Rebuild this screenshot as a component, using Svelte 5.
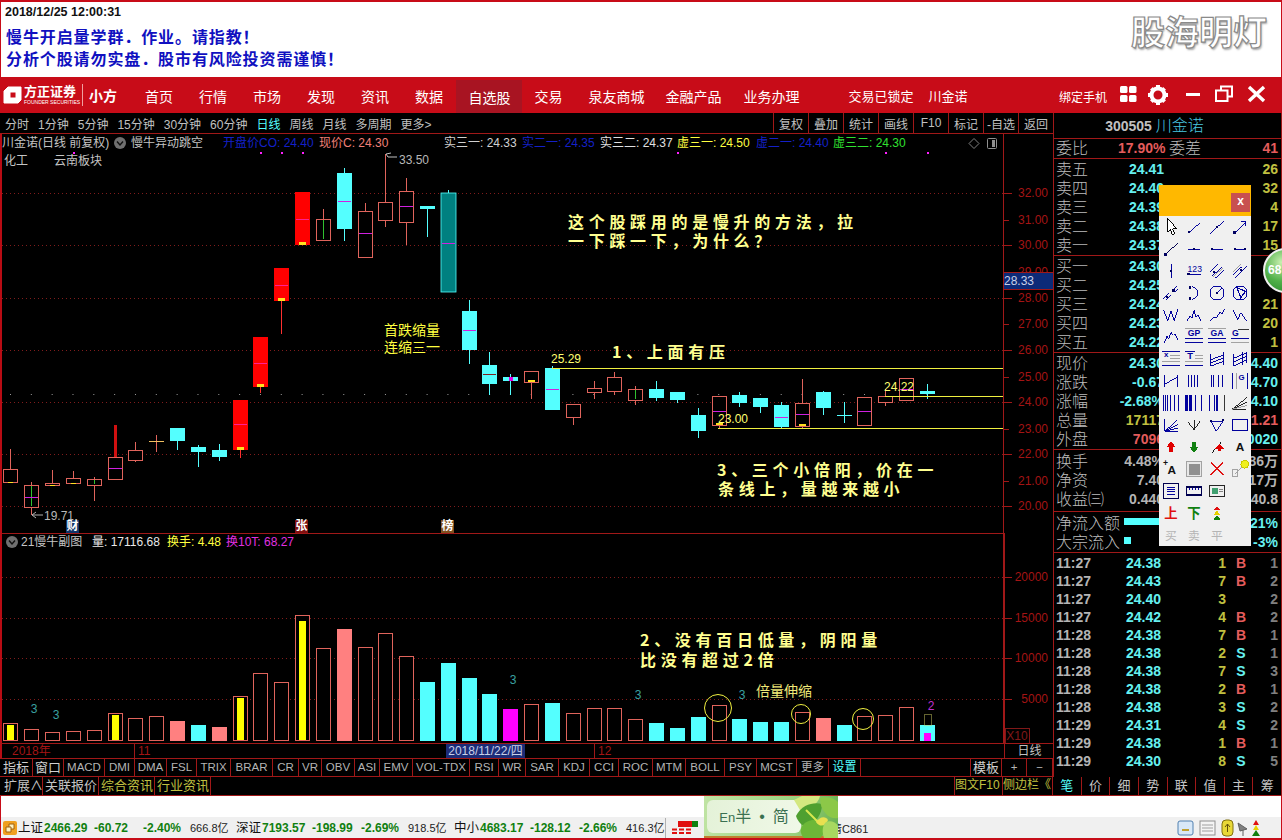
<script>
  const X = (i) => Math.round(10.4 + 20.83 * i);

  // hi, top, bottom, lo, kind, mid, flags
  const candles = [
    [449, 469, 482, 482, 'o', 0, 'y'],
    [482, 485, 507, 515, 'o', 497, 'g'],
    [470, 483, 485, 485, 'o', 0, 'y'],
    [471, 478, 483, 483, 'o', 0, 'y'],
    [477, 479, 485, 501, 'o', 0, 'g'],
    [425, 457, 479, 479, 'o', 468, 'w'],
    [442, 450, 460, 462, 'o', 0, ''],
    [435, 441, 442, 452, 'x', 0, ''],
    [428, 428, 441, 450, 'c', 0, ''],
    [445, 447, 452, 467, 'c', 0, ''],
    [444, 450, 457, 461, 'c', 0, ''],
    [400, 400, 450, 458, 'r', 424, 'y'],
    [337, 337, 387, 393, 'r', 363, 'y'],
    [268, 268, 301, 334, 'r', 285, 'y'],
    [192, 192, 245, 245, 'r', 219, 'y'],
    [209, 219, 240, 240, 'o', 0, 'g'],
    [168, 173, 229, 241, 'c', 201, ''],
    [203, 211, 257, 258, 'o', 233, ''],
    [154, 202, 220, 227, 'o', 0, ''],
    [178, 191, 222, 245, 'o', 206, ''],
    [206, 206, 209, 237, 'c', 0, ''],
    [190, 193, 292, 292, 't', 243, ''],
    [300, 311, 350, 364, 'c', 330, ''],
    [352, 365, 384, 395, 'c', 374, ''],
    [374, 377, 381, 395, 'c', 379, 'p'],
    [371, 371, 382, 399, 'o', 0, 'y'],
    [366, 368, 410, 410, 'c', 389, ''],
    [404, 404, 417, 425, 'o', 0, ''],
    [381, 388, 392, 399, 'o', 0, ''],
    [372, 377, 391, 395, 'o', 0, ''],
    [386, 389, 400, 405, 'o', 0, 'g'],
    [381, 389, 398, 401, 'c', 0, ''],
    [392, 392, 400, 403, 'c', 0, ''],
    [408, 415, 431, 438, 'c', 0, ''],
    [396, 396, 425, 428, 'o', 411, 'y'],
    [392, 395, 403, 407, 'c', 0, ''],
    [398, 398, 407, 413, 'c', 0, ''],
    [402, 405, 427, 429, 'c', 417, ''],
    [379, 403, 426, 428, 'o', 414, 'y'],
    [391, 392, 408, 415, 'c', 0, ''],
    [402, 415, 416, 423, 'z', 0, ''],
    [397, 397, 425, 425, 'o', 411, ''],
    [389, 396, 402, 406, 'o', 0, ''],
    [378, 378, 400, 400, 'o', 389, ''],
    [384, 391, 394, 399, 'c', 0, '']
  ];

  // top of bar, kind (o hollow, y hollow + yellow core, s salmon, c cyan, m magenta)
  const volumes = [
    [723, 'y'], [729, 'o'], [732, 'o'], [731, 'o'], [730, 'o'], [713, 'y'], [718, 'o'], [716, 'o'], [721, 's'],
    [725, 'c'], [727, 's'], [696, 'y'], [673, 'o'], [682, 'o'], [615, 'y'], [648, 'o'], [629, 's'], [647, 'o'],
    [633, 'o'], [656, 'o'], [682, 'c'], [663, 'c'], [678, 'c'], [694, 'c'], [709, 'm'], [704, 'o'], [703, 'c'],
    [713, 'o'], [708, 'o'], [708, 'o'], [719, 'o'], [723, 'c'], [728, 'c'], [717, 'c'], [705, 'o'], [719, 'c'],
    [722, 'c'], [722, 'c'], [712, 'o'], [718, 's'], [725, 'c'], [716, 'o'], [715, 'o'], [707, 'o'], [725, 'c']
  ];

  const priceAxis = [
    ['32.00', 193], ['31.00', 220], ['30.00', 245], ['29.00', 272], ['28.00', 298], ['27.00', 324], ['26.00', 350],
    ['25.00', 377], ['24.00', 402], ['23.00', 429], ['22.00', 454], ['21.00', 481], ['20.00', 506]
  ];
  const volAxis = [['20000', 577], ['15000', 618], ['10000', 658], ['5000', 699]];
  const priceGrid = [193, 245, 298, 350, 402, 454, 506];
  const volGrid = [577, 618, 658, 699];
  const marks = [73, 260, 281, 302, 677, 885, 927];

  const legend = [
    ['川金诺(日线 前复权)', 2, '#c4c4c4'], ['慢牛异动跳空', 131, '#c4c4c4'], ['开盘价CO: 24.40', 223, '#1420c8'],
    ['现价C: 24.30', 319, '#f08078'], ['实三一: 24.33', 444, '#d0d0d0'], ['实二一: 24.35', 522, '#1420c8'],
    ['实三二: 24.37', 600, '#e0e0e0'], ['虚三一: 24.50', 677, '#ffff40'], ['虚二一: 24.40', 756, '#1420c8'],
    ['虚三二: 24.30', 833, '#30e030']
  ];

  const notes = [
    ['这个股踩用的是慢升的方法，拉', 568, 221], ['一下踩一下，为什么？', 568, 240], ['1、上面有压', 612, 351],
    ['3、三个小倍阳，价在一', 717, 469], ['条线上，量越来越小', 718, 488], ['2、没有百日低量，阴阳量', 640, 639],
    ['比没有超过2倍', 640, 659]
  ];

  const navItems = ['首页', '行情', '市场', '发现', '资讯', '数据', '自选股', '交易', '泉友商城'];
  const periods = ['分时', '1分钟', '5分钟', '15分钟', '30分钟', '60分钟', '日线', '周线', '月线', '多周期', '更多>'];
  const actions = ['复权', '叠加', '统计', '画线', 'F10', '标记', '-自选', '返回'];
  const indicators = ['指标', '窗口', 'MACD', 'DMI', 'DMA', 'FSL', 'TRIX', 'BRAR', 'CR', 'VR', 'OBV', 'ASI', 'EMV', 'VOL-TDX', 'RSI', 'WR', 'SAR', 'KDJ', 'CCI', 'ROC', 'MTM', 'BOLL', 'PSY', 'MCST', '更多', '设置'];
  const sideTabs = ['笔', '价', '细', '势', '联', '值', '主', '筹'];

  const asks = [['卖五', '24.41', '26'], ['卖四', '24.40', '32'], ['卖三', '24.39', '4'], ['卖二', '24.38', '17'], ['卖一', '24.37', '15']];
  const bids = [['买一', '24.30', ''], ['买二', '24.25', ''], ['买三', '24.24', '21'], ['买四', '24.23', '20'], ['买五', '24.22', '1']];
  const stats = [
    ['现价', '24.30', 'cyan', '24.40', 'cyan'], ['涨跌', '-0.67', 'cyan', '24.70', 'cyan'], ['涨幅', '-2.68%', 'cyan', '24.10', 'cyan'],
    ['总量', '17117', 'olive', '1.21', 'red'], ['外盘', '7096', 'red', '10020', 'cyan']
  ];
  const funds = [['换手', '4.48%', '86万'], ['净资', '7.40', '17万'], ['收益㈢', '0.440', '40.8']];
  const trades = [
    ['11:27', '24.38', 1, 'B', 1], ['11:27', '24.43', 7, 'B', 2], ['11:27', '24.40', 3, '', 2], ['11:27', '24.42', 4, 'B', 2],
    ['11:28', '24.38', 7, 'B', 1], ['11:28', '24.38', 2, 'S', 1], ['11:28', '24.38', 7, 'S', 3], ['11:28', '24.38', 2, 'B', 1],
    ['11:28', '24.38', 3, 'S', 2], ['11:29', '24.31', 4, 'S', 2], ['11:29', '24.38', 1, 'B', 1], ['11:29', '24.30', 8, 'S', 5]
  ];
  const indices = [
    ['上证', '2466.29', '-60.72', '-2.40%', '666.8亿'],
    ['深证', '7193.57', '-198.99', '-2.69%', '918.5亿'],
    ['中小', '4683.17', '-128.12', '-2.66%', '416.3亿']
  ];

  const dot = (x, y) => `<rect x="${x - 1.5}" y="${y - 1.5}" width="3" height="3" fill="#000060" stroke="none"/>`;
  const label = (t, x, y, size = 9, fill = '#00009c', weight = 'normal') =>
    `<text x="${x}" y="${y}" font-size="${size}" font-weight="${weight}" fill="${fill}" stroke="none" text-anchor="middle">${t}</text>`;
  const gray = '#a0a0a0';
  const tools = [
    '<path d="M7 0V17L10 14L13 21L16 19.5L13 13H18Z" fill="#fff" stroke="#000"/>',
    '<path d="M4 18L18 5"/>' + dot(5, 17),
    '<path d="M2 20L20 3"/>' + dot(11, 11),
    '<path d="M4 18L18 4M12 4H18V10"/>' + dot(4, 18),
    '<path d="M2 20L20 3" stroke="#000050"/>' + dot(4, 18),
    '<path d="M3 11H19"/>' + dot(11, 11),
    '<path d="M3 11H19"/>' + dot(5, 11),
    '<path d="M3 11H19"/>' + dot(5, 11) + dot(17, 11),
    '<path d="M11 2V20"/>' + dot(11, 11),
    label('123', 12, 12, 11) + '<path d="M3 15H20"/>' + dot(4, 15),
    `<path d="M2 12L12 3M4 17L17 5M9 20L20 10" /><path d="M6 18L18 8" stroke="${gray}"/>` + dot(7, 12),
    `<path d="M2 16L14 5M5 19L20 5" /><path d="M2 12L12 3" stroke="${gray}"/>` + dot(12, 10),
    '<path d="M2 18L9 11M12 8L18 3M5 20L12 13M15 10L20 6"/>' + dot(6, 16) + dot(14, 8),
    '<path d="M8 3A8 8 0 0 1 8 19"/>' + dot(6, 4) + dot(6, 18),
    '<circle cx="11" cy="11" r="9"/><path d="M11 11L17 5"/>' + dot(11, 11),
    '<circle cx="11" cy="11" r="9"/><path d="M7 4L18 9L12 17Z" stroke-width="1.4"/>',
    '<path d="M2 4L7 18L11 6L15 18L20 3"/>',
    '<path d="M2 19L6 12L8 15L11 4L14 14L16 11L20 19"/>',
    '<path d="M2 19L7 13L10 15L15 7L17 10L21 3"/>',
    '<path d="M2 5L8 17L12 8L19 18"/>',
    '<path d="M2 19L6 10L8 13L11 4L14 9L16 7L20 15"/>',
    `<path d="M0 0H22" stroke="${gray}"/>` + label('GP', 11, 10, 11, '#00009c', 'bold') + `<path d="M0 13H22M0 18H22"/>`,
    `<path d="M0 0H22" stroke="${gray}"/>` + label('GA', 11, 10, 11, '#00009c', 'bold') + `<path d="M0 13H22M0 18H22"/>`,
    `<path d="M9 1H22" stroke="#333"/>` + label('G', 5, 10, 11, '#00009c', 'bold') + `<path d="M0 13H22"/><path d="M0 18H22" stroke="${gray}"/>`,
    label('x', 5, 9, 10, '#00009c', 'bold') + `<path d="M0 2H22M0 19H22"/><path d="M10 6H22M10 10H22M0 14H22" stroke="${gray}"/>`,
    label('T', 6, 11, 12, '#00009c', 'bold') + `<path d="M0 2H12M0 19H22"/><path d="M12 6H22M12 10H22M0 14H22" stroke="${gray}"/>`,
    '<path d="M3 5V20M19 2V18M3 20L19 14M3 12L19 6M3 16L19 10"/>',
    '<path d="M3 5V20M14 2V18M19 2V16M3 20L20 12M3 15L20 7M3 10L20 3"/>',
    '<path d="M3 3V19M19 3V19M3 15L19 6"/>',
    '<path d="M4 3V19M8 3V19M12 3V19M16 3V19"/>',
    '<path d="M4 3V19M7 3V19M13 3V19M18 3V19"/>',
    `<path d="M1 1V21M21 1V21"/><path d="M6 1V21" stroke="${gray}"/>` + label('G', 13, 10, 10, '#00009c', 'bold'),
    '<path d="M1 1V21M4 1V21M7 1V21M10 1V21M15 1V21M20 1V21"/>',
    '<path d="M1 1V21M3 1V21M5 1V21M7 1V21" stroke-width="1.8"/><path d="M13 1V21M20 1V21"/>',
    '<path d="M2 1V21M8 1V21M10 1V21M12 1V21"/><path d="M20 1V21" stroke="#333"/>',
    `<path d="M1 19L20 4M1 19L20 10M1 19H18" stroke="#222"/><path d="M1 19L20 14" stroke="${gray}"/>`,
    '<path d="M3 3V19H20M3 19L19 5M3 19L20 10M3 19L20 15"/>',
    '<path d="M3 7L11 17L19 6M11 5V17" stroke="#222"/>',
    '<path d="M3 6H19L10 19Z" stroke-width="1.2"/>' + dot(3, 6) + dot(19, 5),
    '<rect x="2" y="4" width="18" height="14" stroke-width="1.4"/>',
    '<path d="M11 4L17 11H13V17H9V11H5Z" fill="#e00000" stroke="none"/>',
    '<path d="M11 18L17 11H13V5H9V11H5Z" fill="#108010" stroke="none"/>',
    '<path d="M3 19L16 4" stroke="#111"/><path d="M14 7L20 13H16V16H12V13H8Z" fill="#e00000" stroke="none"/>',
    label('A', 11, 16, 15, '#111', 'bold'),
    label('+', 4, 7, 11, '#111', 'bold') + label('A', 12, 17, 15, '#111', 'bold'),
    '<rect x="1" y="1" width="20" height="20" fill="#e8e8e8" stroke="#a0a0a0"/><rect x="4" y="4" width="14" height="14" fill="#909090" stroke="none"/>',
    '<path d="M3 3L19 19M19 3L3 19" stroke="#e01010" stroke-width="1.8"/>',
    `<rect x="1" y="11" width="7" height="9" stroke="${gray}"/><path d="M5 17L15 7" stroke="${gray}"/><circle cx="17" cy="5" r="5" fill="#f0f020" stroke="#c8c800"/>`,
    '<rect x="2" y="1" width="18" height="20" stroke="#000050" stroke-width="1.4"/><path d="M6 6H16M6 9H16M6 12H16M6 15H16"/>',
    '<rect x="1" y="6" width="20" height="10" stroke="#000050" stroke-width="1.6"/><path d="M5 7V10M9 7V10M13 7V10M17 7V10"/>',
    '<rect x="2" y="4" width="18" height="14" stroke="#222"/><rect x="5" y="7" width="7" height="8" fill="#40a070" stroke="none"/><path d="M13 9H18M13 12H18" stroke="#808080"/>',
    '',
    label('上', 11, 17, 17, '#e01010', 'bold'),
    label('下', 11, 17, 17, '#108010', 'bold'),
    '<path d="M11 2L15 7H7Z" fill="#e01010" stroke="none"/><path d="M11 8L15 13H7Z" fill="#e8d000" stroke="none"/><path d="M11 14L16 20H6Z" fill="#108010" stroke="none"/>',
    '',
    label('买', 11, 17, 15, '#b4b4b4'),
    label('卖', 11, 17, 15, '#b4b4b4'),
    label('平', 11, 17, 15, '#b4b4b4'),
    ''
  ];
</script>

<div class="app">
  <header class="banner">
    <div class="stamp">2018/12/25 12:00:31</div>
    <p>慢牛开启量学群．作业。请指教！</p>
    <p>分析个股请勿实盘．股市有风险投资需谨慎！</p>
    <div class="brand">股海明灯</div>
  </header>

  <nav class="nav">
    <div class="logo">
      <svg width="20" height="22" viewBox="0 0 20 22">
        <path d="M5 3H18V16L15 19H1V7Z M7 8V14H13V8Z" fill="#fff" fill-rule="evenodd" stroke="#fff" stroke-linejoin="round" />
      </svg>
      <div class="logo-name"><b>方正证券</b><small>FOUNDER SECURITIES</small></div>
      <i></i>
      <b class="logo-xf">小方</b>
    </div>
    {#each navItems as item}
      <span class="nav-item" class:active={item === '自选股'}>{item}</span>
    {/each}
    <span class="nav-item tight first">金融产品</span>
    <span class="nav-item tight">业务办理</span>
    <span class="nav-item lock">交易已锁定</span>
    <span class="nav-item stock">川金诺</span>
    <div class="nav-right">
      <span class="bind">绑定手机</span>
      <svg class="win-icons" width="150" height="22" viewBox="0 0 150 22" fill="#fff">
        <rect x="1" y="2" width="7.5" height="7" rx="1.5" /><rect x="10" y="2" width="7.5" height="7" rx="1.5" />
        <rect x="1" y="11" width="7.5" height="7" rx="1.5" /><rect x="10" y="11" width="7.5" height="7" rx="1.5" />
        <g transform="translate(39 11)">
          <circle r="6.5" fill="none" stroke="#fff" stroke-width="4" />
          <path d="M-2-10H2V-6H-2ZM-2 6H2V10H-2ZM-10-2H-6V2H-10ZM6-2H10V2H6ZM-8-5.2L-5.2-8L-3-5.5L-5.5-3ZM8 5.2L5.2 8L3 5.5L5.5 3ZM-8 5.2L-5.5 3L-3 5.5L-5.2 8ZM8-5.2L5.5-3L3-5.5L5.2-8Z" />
        </g>
        <rect x="67" y="9" width="14" height="3" />
        <path d="M97 6.5H108.5V17H97ZM102 6V2.5H113V12.5H109" fill="none" stroke="#fff" stroke-width="2" />
        <path d="M130 3L145 17M145 3L130 17" stroke="#fff" stroke-width="3.4" />
      </svg>
    </div>
  </nav>

  <div class="main">
    <section class="left">
      <div class="periods">
        {#each periods as p}<span class:on={p === '日线'}>{p}</span>{/each}
        <div class="actions">{#each actions as a}<span>{a}</span>{/each}</div>
      </div>

      <svg class="chart" width="1053" height="609" viewBox="0 134 1053 609" font-size="12">
        <rect x="0" y="134" width="2" height="609" fill="#b80c14" />
        <line x1="2" x2="1003" y1="533.5" y2="533.5" stroke="#a01818" />
        <line x1="1003.5" x2="1003.5" y1="134" y2="743" stroke="#a01818" />
        <line x1="1004" x2="1004" y1="533" y2="743" stroke="#a01818" stroke-width="2" />

        {#each priceGrid as y}
          <line x1="2" x2="1003" y1={y + 0.5} y2={y + 0.5} class="dots" />
        {/each}
        {#each volGrid as y}
          <line x1="2" x2="1003" y1={y + 0.5} y2={y + 0.5} class="dots" />
        {/each}
        <line x1="10" x2="940" y1="394.5" y2="394.5" stroke="#9a9a9a" stroke-dasharray="1 19.83" />
        {#each marks as x}<rect {x} y="152" width="2" height="2" fill="#ff20ff" />{/each}

        {#each legend as [t, x, fill]}<text {x} y="143" {fill}>{t}</text>{/each}
        <circle cx="120" cy="143" r="6" fill="#707070" />
        <path d="M117 141.5L120 145L123 141.5" fill="none" stroke="#111" stroke-width="1.4" />
        <path d="M974 138.5L979 143.5L974 148.5L969 143.5Z" fill="none" stroke="#808080" />
        <rect x="987.5" y="138.5" width="9" height="10" rx="1" fill="none" stroke="#909090" />
        <rect x="992" y="140" width="3" height="7" fill="#909090" />
        <text x="4" y="161" fill="#c4c4c4">化工</text>
        <text x="54" y="161" fill="#c4c4c4">云南板块</text>

        {#each candles as [hi, top, bot, lo, kind, mid, flag], i}
          {@const cx = X(i)}
          {@const stem = kind === 'c' || kind === 't' || kind === 'z' ? '#54ffff' : kind === 'r' ? '#ff3030' : '#e0645c'}
          <line x1={cx + 0.5} x2={cx + 0.5} y1={hi} y2={lo} stroke={stem} stroke-width={flag === 'w' ? 3 : 1} class:cutoff={flag === 'w'} />
          {#if kind === 'x' || kind === 'z'}
            <rect x={cx - 7} y={top} width="15" height="1" fill={kind === 'x' ? '#f0c060' : '#54ffff'} />
          {:else if kind === 'o'}
            <rect x={cx - 6.5} y={top + 0.5} width="14" height={bot - top} fill="#000" stroke="#e0645c" />
            {#if flag === 'g'}<line x1={cx + 0.5} x2={cx + 0.5} y1={top + 1} y2={bot - 1} stroke="#30c030" />{/if}
          {:else}
            <rect x={cx - 7} y={top} width="15" height={bot - top} fill={kind === 'c' ? '#54ffff' : kind === 't' ? '#008080' : '#ff0000'} stroke={kind === 't' ? '#54ffff' : 'none'} stroke-width="0.8" />
          {/if}
          {#if mid}
            {#if flag === 'p'}
              <rect x={cx - 1} y={mid - 2} width="4" height="4" fill="#e000e0" />
            {:else}
              <rect x={cx - 6} y={mid} width="13" height="1" fill={kind === 'r' ? '#ff2090' : mid === 374 ? '#802020' : '#d020e0'} />
            {/if}
          {/if}
          {#if flag === 'y'}
            {#if i < 4}
              <rect x={cx - 2} y={bot} width="5" height="1" fill="#ffe020" />
            {:else}
              <rect x={cx - 3} y={bot - (kind === 'r' ? 3 : 2)} width="7" height={kind === 'r' ? 3 : 2} fill="#ffe020" />
            {/if}
          {/if}
        {/each}

        <line x1="552" x2="1003" y1="368.5" y2="368.5" class="level" />
        <line x1="885" x2="1003" y1="396.5" y2="396.5" class="level" />
        <line x1="718" x2="1003" y1="428.5" y2="428.5" class="level" />
        <text x="551" y="359" class="price-tag">25.29</text>
        <text x="718" y="419" class="price-tag">23.00</text>
        <text x="884" y="387" class="price-tag">24.22</text>

        <path d="M386 154L388 157H397M386 154L391 153" fill="none" stroke="#c0c0c0" />
        <text x="399" y="160" fill="#b8b8b8">33.50</text>
        <path d="M32 515H43M32 515L36 512M32 515L36 518" fill="none" stroke="#b0b0b0" />
        <text x="44" y="516" fill="#b8b8b8">19.71</text>

        <rect x="66" y="520" width="13" height="13" fill="#103468" />
        <text x="72.5" y="526" class="tag">财</text>
        <rect x="295" y="520" width="13" height="13" fill="#801010" />
        <text x="301.5" y="526" class="tag">张</text>
        <rect x="441" y="520" width="13" height="13" fill="#805020" />
        <text x="447.5" y="526" class="tag">榜</text>

        <text x="384" y="330" class="hint">首跌缩量</text>
        <text x="384" y="347" class="hint">连缩三一</text>
        <text x="756" y="691" class="hint soft">倍量伸缩</text>
        {#each notes as [t, x, y]}<text {x} {y} class="note">{t}</text>{/each}

        <circle cx="12" cy="542" r="6" fill="#707070" />
        <path d="M9 540.5L12 544L15 540.5" fill="none" stroke="#111" stroke-width="1.4" />
        <text x="21" y="542" fill="#c4c4c4">21慢牛副图</text>
        <text x="92" y="542" fill="#e8e8e8">量: 17116.68</text>
        <text x="167" y="542" fill="#ffff40">换手: 4.48</text>
        <text x="226" y="542" fill="#e030e0">换10T: 68.27</text>

        {#each volumes as [top, kind], i}
          {@const cx = X(i)}
          {#if kind === 'o' || kind === 'y'}
            <rect x={cx - 6.5} y={top + 0.5} width="14" height={740 - top} fill="#000" stroke="#e0645c" />
            {#if kind === 'y'}
              <rect x={cx - 3} y={top + (i === 14 ? 6 : 2)} width="7" height={740 - top - (i === 14 ? 6 : 2)} fill="#ffff00" />
            {/if}
          {:else}
            <rect x={cx - 7} y={top} width="15" height={741 - top} fill={kind === 's' ? '#ff8080' : kind === 'c' ? '#54ffff' : '#ff00ff'} />
          {/if}
        {/each}
        <rect x="924" y="733" width="7" height="8" fill="#ff00ff" />
        <rect x="924.5" y="714.5" width="7" height="11" fill="none" stroke="#c8c860" stroke-dasharray="1 1" />

        <text x="34" y="709" class="count">3</text>
        <text x="56" y="715" class="count">3</text>
        <text x="513" y="680" class="count">3</text>
        <text x="638" y="695" class="count">3</text>
        <text x="742" y="695" class="count">3</text>
        <text x="931" y="706" class="count two">2</text>

        <circle cx="718" cy="708" r="13.5" class="ring" />
        <circle cx="801" cy="714" r="9.5" class="ring" />
        <circle cx="863" cy="719" r="10.5" class="ring" />

        {#each priceAxis as [t, y], i}
          <line x1="1004" x2={i % 2 ? 1009 : 1012} y1={y + 0.5} y2={y + 0.5} stroke="#a01818" />
          <text x="1048" {y} text-anchor="end" fill="#a41414">{t}</text>
        {/each}
        {#each volAxis as [t, y]}
          <line x1="1005" x2="1012" y1={y + 0.5} y2={y + 0.5} stroke="#a01818" />
          <text x="1048" {y} text-anchor="end" fill="#a41414">{t}</text>
        {/each}
        <rect x="1004" y="273" width="49" height="16" fill="#0c2a78" />
        <line x1="1004" x2="1053" y1="272.5" y2="272.5" stroke="#a01818" />
        <line x1="1004" x2="1053" y1="289.5" y2="289.5" stroke="#a01818" />
        <text x="1004" y="281" fill="#c8d0e8">28.33</text>

        <rect x="1005.5" y="728.5" width="24" height="15" fill="none" stroke="#801818" />
        <text x="1017" y="736" text-anchor="middle" fill="#801818">X10</text>
      </svg>

      <div class="timeline">
        <span class="t-year">2018年</span>
        <span class="t-mon">11</span>
        <span class="t-date">2018/11/22/四</span>
        <span class="t-gap"></span>
        <span class="t-dec">12</span>
        <span class="t-unit">日线</span>
      </div>

      <div class="indicators">
        {#each indicators as n}<span class:on={n === '设置'} class:cn={n === '指标' || n === '窗口'}>{n}</span>{/each}
        <span class="spare"></span>
        <span class="cn">模板</span>
        <span>+</span>
        <span>−</span>
      </div>
    </section>

    <aside class="quote">
      <div class="q-title"><b>300505</b> <span>川金诺</span></div>
      <div class="q-ratio">
        <label>委比</label><b class="red">17.90%</b><label>委差</label><b class="red end">41</b>
      </div>
      <div class="q-block">
        {#each asks as [a, b, c]}
          <div class="q-row"><label>{a}</label><b class="cyan">{b}</b><b class="olive end">{c}</b></div>
        {/each}
      </div>
      <div class="q-block">
        {#each bids as [a, b, c]}
          <div class="q-row"><label>{a}</label><b class="cyan">{b}</b><b class="olive end">{c}</b></div>
        {/each}
      </div>
      <div class="q-block">
        {#each stats as [a, b, bc, c, cc]}
          <div class="q-row"><label>{a}</label><b class={bc}>{b}</b><b class="{cc} end">{c}</b></div>
        {/each}
      </div>
      <div class="q-block funds">
        {#each funds as [a, b, c]}
          <div class="q-row"><label>{a}</label><b class="silver">{b}</b><b class="silver end">{c}</b></div>
        {/each}
      </div>
      <div class="q-block flows">
        <div class="q-row flow"><label>净流入额</label><i class="bar wide"></i><b class="cyan end">21%</b></div>
        <div class="q-row flow"><label>大宗流入</label><i class="bar"></i><b class="cyan end">-3%</b></div>
      </div>
      <div class="trades">
        {#each trades as [time, price, vol, side, n]}
          <div class="trade">
            <b class="silver">{time}</b>
            <b class="cyan">{price}</b>
            <b class="olive">{vol}</b>
            <b class={side === 'B' ? 'red' : 'cyan'}>{side}</b>
            <b class="dim">{n}</b>
          </div>
        {/each}
      </div>
    </aside>
  </div>

  <div class="extras">
    <div class="ex-left">
      <span>扩展∧</span><span>关联报价</span><span class="gold">综合资讯</span><span class="gold">行业资讯</span>
      <span class="gold push">图文F10</span><span class="gold side">侧边栏《</span>
    </div>
    <div class="ex-tabs">{#each sideTabs as t}<span class:on={t === '笔'}>{t}</span>{/each}</div>
  </div>

  <footer class="footer">
    <div class="status">
      <svg class="s-home" width="14" height="14" viewBox="0 0 14 14">
        <rect width="14" height="14" rx="2" fill="#f0a020" />
        <path d="M3 6H8V11H3ZM6 6V3H11V8H8" fill="#fff3c0" stroke="#a06010" />
      </svg>
      {#each indices as [name, val, chg, pct, amt]}
        <div class="index">
          <span>{name}</span><b>{val}</b><b>{chg}</b><b>{pct}</b><span class="amt">{amt}</span>
        </div>
      {/each}
      <i class="sep"></i>
      <svg class="s-bars" width="26" height="14" viewBox="0 0 26 14">
        <rect x="6" y="0" width="14" height="6" fill="#e01010" />
        <rect x="20" y="0" width="6" height="6" fill="#108010" />
        <path d="M0 8.5H5M7 8.5H12M14 8.5H19M0 12H5M7 12H12M14 12H19" stroke="#e01010" stroke-width="2" />
      </svg>
      <span class="ticker">清C861</span>
      <svg class="s-tray" width="84" height="18" viewBox="0 0 84 18">
        <rect x="1" y="2" width="15" height="14" rx="2" fill="#d8e8f8" stroke="#5080b0" />
        <path d="M5 11H12" stroke="#c0a030" stroke-width="2" />
        <rect x="23" y="2" width="15" height="14" fill="#f4f4f4" stroke="#909090" />
        <path d="M25 6H36M25 9H36M25 12H36" stroke="#a0a0a0" />
        <rect x="45" y="1" width="11" height="16" rx="4" fill="#e8d838" stroke="#807010" />
        <path d="M50.5 5V13M48 8L50.5 5L53 8" fill="none" stroke="#605008" />
        <path d="M61 4L70 10L63 12ZM66 11V17" fill="#808080" stroke="#606060" />
        <path d="M79 1L82 6H76Z" fill="#e01010" /><path d="M79 6L82 11H76Z" fill="#e8d000" /><path d="M79 11L83 17H75Z" fill="#108010" />
      </svg>
    </div>
  </footer>

  <div class="ball">68</div>

  <div class="drawbar">
    <div class="drawbar-head"><span>x</span></div>
    <div class="drawbar-grid">
      {#each tools as tool}
        <svg width="22" height="22" viewBox="-3 -3 28 28" fill="none" stroke="#00009c" stroke-width="1.25" shape-rendering="crispEdges">{@html tool}</svg>
      {/each}
    </div>
  </div>

  <div class="ime">
    <div class="ime-pad"><span>En</span>半<em>•</em>简</div>
    <svg class="ime-leaf" width="44" height="42" viewBox="0 0 44 42">
      <path d="M0 4L8 0H26C24 8 16 14 6 14Z" fill="#d4e880" />
      <path d="M2 20C8 8 20 6 28 8C28 18 22 28 12 30C8 30 4 26 2 20Z" fill="#4fa030" />
      <path d="M10 42C2 34 10 24 20 24C30 24 34 34 26 42Z" fill="#6cb838" />
      <path d="M26 2C32 0 40 2 44 6V22C36 24 26 16 26 2Z" fill="#8cc848" />
      <path d="M12 14L24 26" stroke="#d8e850" stroke-width="2" />
      <path d="M22 26C26 20 32 20 34 24C32 30 26 32 22 26Z" fill="#e8e050" />
      <path d="M32 26C36 24 42 26 44 30V42H30C28 36 28 30 32 26Z" fill="#a8d860" />
    </svg>
  </div>
</div>

<style>
  :global(body) {
    margin: 0;
    background: #000;
  }

  .app {
    position: relative;
    width: 1282px;
    height: 840px;
    overflow: hidden;
    display: flex;
    flex-direction: column;
    background: #000;
    color: #c4c4c4;
    font-family: "Liberation Sans", "Noto Sans CJK SC", sans-serif;
    font-size: 12px;
  }

  b {
    font-weight: bold;
  }

  /* top notice */
  .banner {
    position: relative;
    height: 77px;
    flex: none;
    box-sizing: border-box;
    padding: 2px 0 0 5px;
    background: #fff;
    border-top: 2px solid #c80c18;
    border-left: 1px solid #c80c18;
    border-right: 1px solid #c80c18;
  }
  .stamp {
    margin-left: -1px;
    height: 23px;
    line-height: 17px;
    color: #111;
    font-size: 12.5px;
    font-weight: bold;
  }
  .banner p {
    margin: 0;
    height: 22px;
    line-height: 22px;
    color: #1010c0;
    font-size: 16px;
    font-weight: bold;
    letter-spacing: 0.9px;
  }
  .brand {
    position: absolute;
    right: 14px;
    top: 10px;
    color: #fff;
    font-size: 34px;
    font-weight: bold;
    line-height: 42px;
    -webkit-text-stroke: 1.2px #8a8a8a;
    text-shadow: 1px 2px 2px #aaa;
  }

  .nav {
    height: 36px;
    flex: none;
    display: flex;
    align-items: stretch;
    background: #c80c18;
    color: #fff;
    font-size: 14px;
  }
  .logo {
    width: 132px;
    flex: none;
    display: flex;
    align-items: center;
    padding-left: 3px;
    box-sizing: border-box;
  }
  .logo-name {
    display: flex;
    flex-direction: column;
    width: 52px;
    margin-left: 1px;
    line-height: 1;
  }
  .logo-name b {
    font-size: 13px;
  }
  .logo-name small {
    font-size: 5px;
    margin-top: 2px;
    white-space: nowrap;
  }
  .logo i {
    width: 1px;
    height: 22px;
    background: #f0a0a0;
    margin: 0 6px 0 6px;
  }
  .logo-xf {
    font-size: 14px;
  }
  .nav-item {
    display: flex;
    align-items: center;
    padding: 1px 13px 0;
    white-space: nowrap;
  }
  .nav-item.active {
    background: #a81422;
    margin-top: 3px;
    padding: 0 11px 0 12.5px;
  }
  .nav-item.tight {
    padding: 1px 11px 0;
  }
  .nav-item.first {
    margin-left: -3px;
  }
  .nav-item.lock {
    padding: 1px 0 0;
    margin-left: 38px;
    font-size: 13px;
  }
  .nav-item.stock {
    padding: 1px 0 0;
    margin-left: 15px;
    font-size: 13px;
  }
  .nav-right {
    margin-left: auto;
    display: flex;
    align-items: center;
    font-size: 12px;
    padding-right: 13px;
  }
  .bind {
    margin-right: 12px;
    margin-top: 2px;
  }
  .win-icons {
    margin-top: -1px;
  }

  .main {
    flex: none;
    height: 664px;
    display: flex;
  }
  .left {
    width: 1053px;
    flex: none;
    display: flex;
    flex-direction: column;
  }

  .periods {
    height: 21px;
    box-sizing: border-box;
    display: flex;
    align-items: center;
    gap: 9px;
    padding-left: 5px;
    border-bottom: 1px solid #a01818;
    font-size: 12px;
    color: #c0c0c0;
  }
  .periods .on {
    color: #54ffff;
  }
  .actions {
    margin-left: auto;
    display: grid;
    grid-template-columns: repeat(8, 35px);
    height: 100%;
  }
  .actions span {
    display: flex;
    align-items: center;
    justify-content: center;
    border-left: 1px solid #a01818;
  }

  .chart {
    display: block;
    flex: none;
  }
  .chart text {
    dominant-baseline: central;
  }
  .dots {
    stroke: #801c1c;
    stroke-dasharray: 1 3;
  }
  .level {
    stroke: #f0f040;
  }
  .cutoff {
    stroke: #d01010;
  }
  .price-tag {
    fill: #ffff70;
  }
  .tag {
    fill: #fff;
    font-weight: bold;
    text-anchor: middle;
  }
  .hint {
    fill: #ffff40;
    font-size: 14px;
  }
  .hint.soft {
    fill: #f0e878;
  }
  .note {
    fill: #ffff90;
    font-family: "Noto Sans CJK SC", sans-serif;
    font-size: 16px;
    font-weight: bold;
    letter-spacing: 4.7px;
  }
  .count {
    fill: #3aa0a0;
    text-anchor: middle;
    font-size: 12px;
  }
  .count.two {
    fill: #c030d0;
  }
  .ring {
    fill: none;
    stroke: #f0f040;
  }

  .timeline {
    height: 16px;
    box-sizing: border-box;
    display: flex;
    border-top: 1px solid #a01818;
    border-bottom: 1px solid #a01818;
    line-height: 15px;
    font-size: 12px;
    color: #a41414;
  }
  .timeline span {
    flex: none;
  }
  .t-year {
    padding-left: 10px;
    border-left: 2px solid #b80c14;
    width: 122px;
  }
  .t-mon {
    width: 308px;
    padding-left: 3px;
    border-left: 1px solid #a01818;
  }
  .t-date {
    width: 79px;
    background: #1c2c78;
    color: #c8d0e8;
    text-align: center;
  }
  .t-gap {
    width: 69px;
  }
  .t-dec {
    width: 406px;
    padding-left: 3px;
    border-left: 1px solid #a01818;
  }
  .t-unit {
    width: 49px;
    text-align: center;
    color: #c0c0c0;
    border-left: 1px solid #a01818;
  }

  .indicators {
    height: 18px;
    display: grid;
    grid-template-columns: 33px 31px 41px 30px 32px 30px 34px 42px 26px 23px 33px 25px 33px 57px 29px 27px 33px 31px 29px 34px 33px 39px 32px 40px 32px 32px 110px 31px 25px 26px;
    align-items: stretch;
    border-bottom: 1px solid #a01818;
    box-sizing: border-box;
    font-size: 11.5px;
    color: #b4b4b4;
    line-height: 17px;
  }
  .indicators span {
    text-align: center;
    border-right: 1px solid #a01818;
    box-sizing: border-box;
    white-space: nowrap;
    overflow: hidden;
  }
  .indicators .cn {
    font-size: 13px;
    color: #d0d0d0;
  }
  .indicators .on {
    color: #54ffff;
    font-size: 12px;
  }

  /* quote panel */
  .quote {
    flex: 1;
    box-sizing: border-box;
    border-left: 1px solid #a01818;
    border-right: 1px solid #a01818;
    font-size: 14px;
    display: flex;
    flex-direction: column;
  }
  .quote label {
    color: #bcbcbc;
    font-size: 16px;
    font-weight: 300;
    white-space: nowrap;
  }
  .cyan {
    color: #66f0f0;
  }
  .red {
    color: #e45c5c;
  }
  .olive {
    color: #c0c040;
  }
  .silver {
    color: #b4b4b4;
  }
  .dim {
    color: #808080;
  }
  .end {
    text-align: right;
  }
  .q-title {
    height: 26px;
    box-sizing: border-box;
    border-bottom: 1px solid #a01818;
    text-align: center;
    line-height: 25px;
    color: #c0c0c0;
    padding-right: 26px;
  }
  .q-title span {
    color: #4ac8e0;
    font-size: 16px;
    font-weight: 300;
  }
  .q-ratio {
    height: 20px;
    box-sizing: border-box;
    border-bottom: 1px solid #a01818;
    display: grid;
    grid-template-columns: 62px 48px 1fr auto;
    padding: 0 3px 0 2px;
    line-height: 19px;
    white-space: nowrap;
  }
  .q-ratio label:nth-of-type(2) {
    padding-left: 3px;
  }
  .q-block {
    border-bottom: 1px solid #a01818;
    padding-top: 1px;
  }
  .q-block.funds {
    padding: 2px 0;
  }
  .q-block.flows {
    padding-top: 2px;
  }
  .q-row {
    height: 19px;
    display: grid;
    grid-template-columns: 60px 48px 1fr;
    padding: 0 3px 0 2px;
    line-height: 19px;
    white-space: nowrap;
  }
  .q-row b:first-of-type:not(.end) {
    text-align: right;
  }
  .q-row.flow {
    grid-template-columns: 68px 1fr auto;
  }
  .bar {
    display: block;
    height: 7px;
    width: 7px;
    margin-top: 4px;
    background: #54ffff;
  }
  .bar.wide {
    width: 40px;
  }
  .trades {
    padding-top: 1px;
  }
  .trade {
    height: 18px;
    display: grid;
    grid-template-columns: 70px 40px 60px 26px 1fr;
    padding: 0 3px 0 2px;
    line-height: 18px;
  }
  .trade b:nth-child(3) {
    text-align: right;
  }
  .trade b:nth-child(4) {
    text-align: center;
    padding-left: 4px;
  }
  .trade b:nth-child(5) {
    text-align: right;
  }

  .extras {
    height: 18px;
    flex: none;
    display: flex;
    border-bottom: 1px solid #a01818;
    font-size: 13px;
    line-height: 17px;
  }
  .ex-left {
    width: 1053px;
    flex: none;
    display: flex;
  }
  .ex-left span {
    padding: 0 0 0 2px;
    border-right: 1px solid #a01818;
    box-sizing: border-box;
    width: 56px;
    white-space: nowrap;
  }
  .ex-left span:first-child {
    width: 43px;
    padding-left: 4px;
  }
  .ex-left .gold {
    color: #c0c040;
  }
  .ex-left .push {
    margin-left: auto;
    width: 49px;
    border-left: 1px solid #a01818;
    padding: 0;
    font-size: 12px;
  }
  .ex-left .side {
    width: 50px;
    padding: 0;
    font-size: 12px;
  }
  .ex-tabs {
    flex: 1;
    display: grid;
    grid-template-columns: repeat(8, 1fr);
    font-size: 13px;
  }
  .ex-tabs span {
    text-align: center;
    border-right: 1px solid #a01818;
  }
  .ex-tabs .on {
    color: #54ffff;
  }

  /* status strip */
  .footer {
    flex: 1;
    background: #fff;
    border: 1px solid #c80c18;
    border-width: 0 1px 2px;
    display: flex;
    flex-direction: column;
    justify-content: flex-end;
  }
  .status {
    height: 21px;
    background: #f0f0f0;
    display: flex;
    align-items: center;
    color: #222;
    font-size: 12px;
  }
  .s-home {
    margin-left: 2px;
    margin-right: 1px;
    flex: none;
  }
  .index {
    display: grid;
    grid-template-columns: 26px 50px 49px 47px 46px;
    white-space: nowrap;
    font-size: 12px;
    width: 218px;
  }
  .index span:first-child {
    font-size: 12.5px;
    line-height: 16px;
    color: #111;
  }
  .index b {
    color: #108010;
    line-height: 16px;
  }
  .index .amt {
    font-size: 11px;
    line-height: 16px;
  }
  .sep {
    width: 1px;
    height: 20px;
    background: #b0b0b0;
    margin-left: -7px;
    margin-right: 6px;
  }
  .s-bars {
    flex: none;
  }
  .ticker {
    margin-left: 133px;
    font-size: 11px;
  }
  .s-tray {
    margin-left: auto;
    margin-right: 20px;
    flex: none;
  }

  /* floating bits */
  .ball {
    position: absolute;
    left: 1263px;
    top: 248px;
    width: 45px;
    height: 45px;
    box-sizing: border-box;
    border-radius: 50%;
    border: 2px solid #f0f0f0;
    background: radial-gradient(circle at 40% 30%, #c8f0b0, #50b048 50%, #208028);
    color: #fff;
    font-size: 12px;
    font-weight: bold;
    line-height: 41px;
    padding-left: 3px;
  }
  .drawbar {
    position: absolute;
    left: 1159px;
    top: 185px;
    width: 92px;
    height: 361px;
    background: #f0f0f0;
  }
  .drawbar-head {
    height: 31px;
    background: #ffb800;
    position: relative;
  }
  .drawbar-head span {
    position: absolute;
    right: 1px;
    top: 8px;
    width: 19px;
    height: 19px;
    background: #c85050;
    color: #fff;
    font-size: 12px;
    font-weight: bold;
    line-height: 16px;
    text-align: center;
  }
  .drawbar-grid {
    display: grid;
    grid-template-columns: repeat(4, 23px);
    grid-auto-rows: 22px;
    justify-items: center;
  }
  .drawbar-grid svg {
    display: block;
  }
  .ime {
    position: absolute;
    left: 704px;
    top: 796px;
    width: 134px;
    height: 42px;
    background: linear-gradient(100deg, #c0e4a4, #98d07c 70%, #68b050);
    display: flex;
    border-bottom: 2px solid #c08030;
    box-sizing: border-box;
  }
  .ime-pad {
    margin: 4px 0 3px 3px;
    width: 94px;
    border-radius: 6px;
    background: linear-gradient(100deg, #e4f2d8, #f0f8e8);
    color: #3a7050;
    font-size: 16px;
    line-height: 33px;
    text-align: center;
  }
  .ime-pad span {
    font-size: 13px;
  }
  .ime-pad em {
    font-style: normal;
    margin: 0 8px;
  }
  .ime-leaf {
    position: absolute;
    right: 0;
    top: 0;
  }
</style>
